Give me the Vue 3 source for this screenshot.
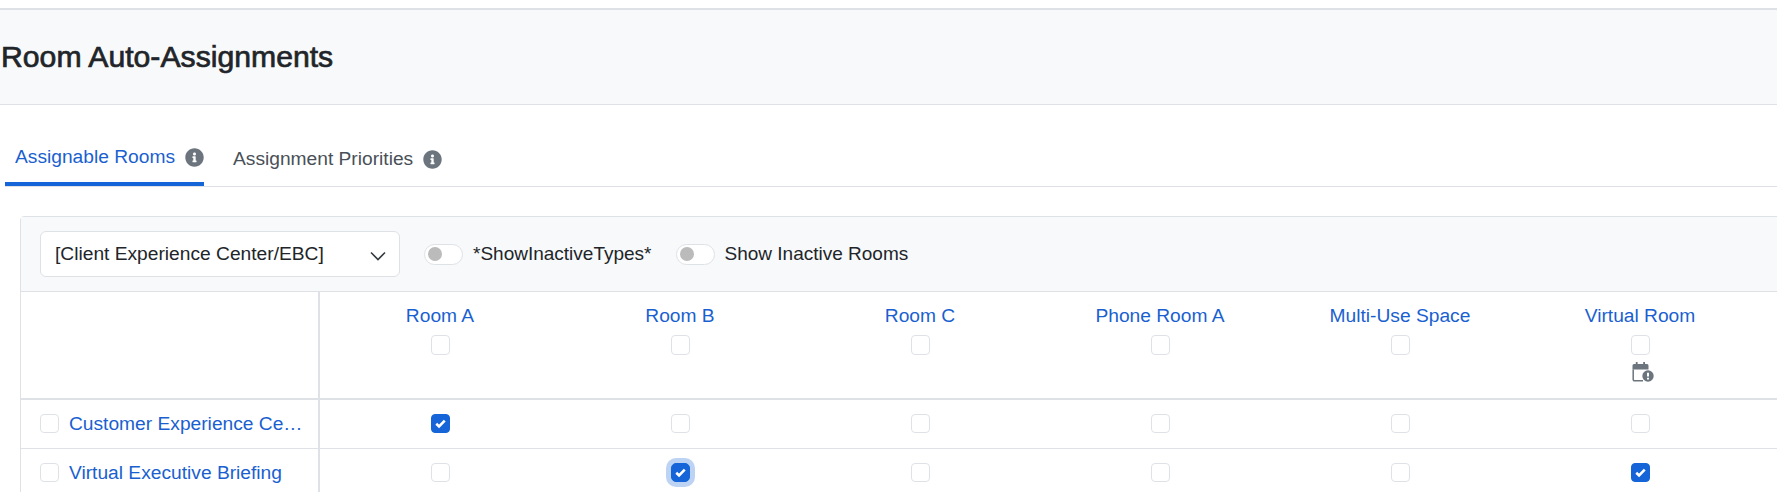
<script setup>
const rooms = ['Room A', 'Room B', 'Room C', 'Phone Room A', 'Multi-Use Space', 'Virtual Room']
const rows = [
  { name: 'Customer Experience Center/EBC', checked: [0], focus: -1 },
  { name: 'Virtual Executive Briefing', checked: [1, 5], focus: 1 }
]
const infoPath = 'M256 8C119 8 8 119 8 256s111 248 248 248 248-111 248-248S393 8 256 8zm0 110c23.196 0 42 18.804 42 42s-18.804 42-42 42-42-18.804-42-42 18.804-42 42-42zm56 254c0 6.627-5.373 12-12 12h-88c-6.627 0-12-5.373-12-12v-24c0-6.627 5.373-12 12-12h12v-64h-12c-6.627 0-12-5.373-12-12v-24c0-6.627 5.373-12 12-12h64c6.627 0 12 5.373 12 12v100h12c6.627 0 12 5.373 12 12v24z'
</script>

<template>
  <div class="page">
    <header class="title-bar"><h1>Room Auto-Assignments</h1></header>

    <nav class="tabs">
      <a class="tab active">
        Assignable Rooms
        <svg class="info" viewBox="0 0 512 512"><path :d="infoPath" /></svg>
      </a>
      <a class="tab">
        Assignment Priorities
        <svg class="info" viewBox="0 0 512 512"><path :d="infoPath" /></svg>
      </a>
    </nav>

    <section class="card">
      <div class="toolbar">
        <div class="select">
          <span>[Client Experience Center/EBC]</span>
          <svg class="chevron" viewBox="0 0 16 10"><path d="M1 1.500l7 7 7-7" /></svg>
        </div>
        <label class="switch"><i class="track"><b class="knob"></b></i>*ShowInactiveTypes*</label>
        <label class="switch"><i class="track"><b class="knob"></b></i>Show Inactive Rooms</label>
      </div>

      <div class="row head">
        <div class="name-cell"></div>
        <div v-for="(room, i) in rooms" :key="room" class="col-head">
          <a class="link">{{ room }}</a>
          <span class="box"></span>
          <svg v-if="i === 5" class="cal" viewBox="0 0 22 20">
            <path class="cal-fill" d="M2 2h13a1.500 1.500 0 0 1 1.500 1.500V7.500H.5V3.500A1.500 1.500 0 0 1 2 2zM3.800 0h1.800V2H3.800zM11.200 0h1.800V2H11.200z" />
            <path class="cal-line" d="M1.200 7.500v10a1.200 1.200 0 0 0 1.200 1.200h8.600" />
            <circle class="cal-fill" cx="16" cy="14" r="5.700" />
            <path class="cal-mark" d="M16 10.800v3.700M16 15.800v1.600" />
          </svg>
        </div>
      </div>

      <div v-for="row in rows" :key="row.name" class="row body">
        <div class="name-cell">
          <span class="box"></span>
          <a class="link name">{{ row.name }}</a>
        </div>
        <div v-for="(room, i) in rooms" :key="room" class="cell">
          <span class="box" :class="{ on: row.checked.includes(i), focus: row.focus === i }">
            <svg v-if="row.checked.includes(i)" viewBox="0 0 20 20"><path d="M5 10.300l3.300 3.200 6.700-7" /></svg>
          </span>
        </div>
      </div>
    </section>
  </div>
</template>

<style>
html, body { margin: 0; overflow: hidden; background: #fff; }
</style>

<style scoped>
.page {
  height: 492px;
  overflow: hidden;
  padding-top: 8px;
  box-sizing: border-box;
  font-family: "Liberation Sans", Arial, sans-serif;
  font-size: 19.2px;
  color: #212529;
}
.title-bar {
  height: 94px;
  border-top: 2px solid #dee2e6;
  border-bottom: 1px solid #dee2e6;
  background: #f8f9fa;
  display: flex;
  align-items: center;
}
h1 {
  margin: 0 0 0 1px;
  font-size: 30.2px;
  font-weight: 500;
  -webkit-text-stroke: 0.7px #212529;
}
.tabs {
  display: flex;
  align-items: flex-end;
  gap: 29px;
  margin: 0 0 0 5px;
  height: 81px;
  border-bottom: 1px solid #dee2e6;
}
.tab {
  display: flex;
  align-items: center;
  gap: 10px;
  color: #495057;
  padding-bottom: 16px;
}
.tab.active {
  color: #1a5fd0;
  padding: 0 0 14px 10px;
  border-bottom: 4px solid #1565d8;
}
.info { width: 19px; height: 19px; fill: #6c757d; }

.card {
  margin: 29px 0 0 20px;
  width: 1790px;
  border: 1px solid #dee2e6;
  border-radius: 4px 0 0 0;
  box-sizing: border-box;
}
.toolbar {
  height: 75px;
  box-sizing: border-box;
  background: #f8f9fa;
  border-bottom: 1px solid #dee2e6;
  display: flex;
  align-items: center;
  padding-left: 19px;
  gap: 24px;
}
.select {
  width: 360px;
  height: 46px;
  box-sizing: border-box;
  background: #fff;
  border: 1px solid #dee2e6;
  border-radius: 6px;
  padding: 0 13px 0 14px;
  display: flex;
  align-items: center;
  justify-content: space-between;
}
.chevron { width: 16px; height: 10px; margin-top: 4px; fill: none; stroke: #343a40; stroke-width: 1.600; }
.switch { display: flex; align-items: center; gap: 10px; font-size: 19px; }
.track {
  width: 39px;
  height: 21px;
  box-sizing: border-box;
  background: #fff;
  border: 1px solid #dee2e6;
  border-radius: 11px;
  display: flex;
  align-items: center;
  padding-left: 3px;
}
.knob { width: 14px; height: 14px; border-radius: 50%; background: #bbbbbb; }

.row { display: grid; grid-template-columns: 299px repeat(6, 240px) 1fr; }
.head { height: 108px; border-bottom: 2px solid #dee2e6; box-sizing: border-box; }
.body { height: 49px; border-bottom: 1px solid #dee2e6; box-sizing: border-box; }
.name-cell {
  border-right: 2px solid #dee2e6;
  display: flex;
  align-items: center;
  gap: 10px;
  padding: 0 0 1px 19px;
  min-width: 0;
  overflow: hidden;
  box-sizing: border-box;
}
.col-head {
  display: flex;
  flex-direction: column;
  align-items: center;
  padding-top: 14px;
  box-sizing: border-box;
}
.col-head .link { line-height: 20px; }
.col-head .box { margin-top: 9px; height: 20px; }
.cal { width: 22px; height: 20px; margin: 7px 0 0 6px; }
.cal-fill { fill: #6c757d; }
.cal-line { fill: none; stroke: #6c757d; stroke-width: 1.500; }
.cal-mark { fill: none; stroke: #fff; stroke-width: 2; }
.cell { display: flex; align-items: center; justify-content: center; padding-bottom: 1px; }
.link { color: #1a5fd0; }
.name {
  flex: 1;
  min-width: 0;
  white-space: nowrap;
  overflow: hidden;
  text-overflow: ellipsis;
  padding-right: 8px;
}
.box {
  flex: none;
  width: 19px;
  height: 19px;
  box-sizing: border-box;
  border: 1px solid #dee2e6;
  border-radius: 4px;
  background: #fff;
  display: block;
}
.box.on { background: #1565d8; border-color: #1565d8; }
.box.focus { box-shadow: 0 0 0 5px #bdd3f3; border-radius: 5px; }
.box svg { display: block; width: 100%; height: 100%; fill: none; stroke: #fff; stroke-width: 3; }
</style>
